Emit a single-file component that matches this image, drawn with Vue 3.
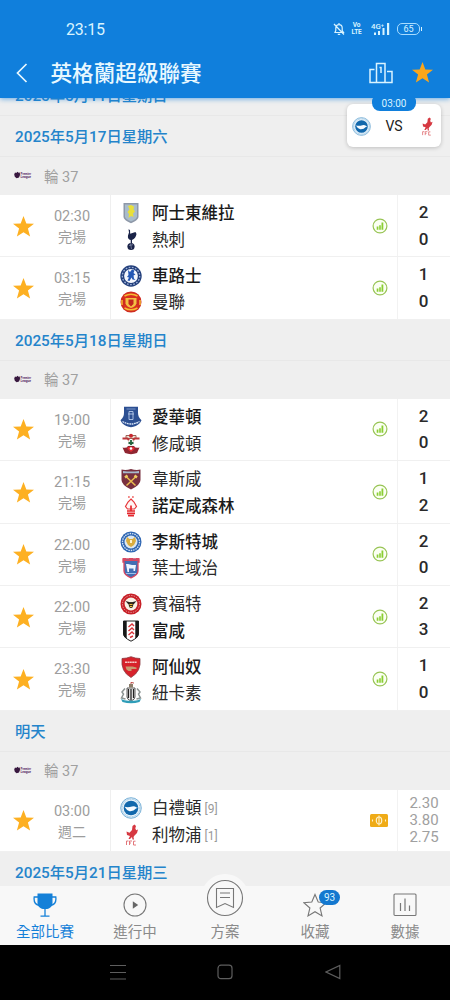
<template>
  <div class="phone">
    <header class="top">
      <div class="status-bar">
        <span class="clock">23:15</span>
        <div class="status-icons">
          <svg class="bell" viewBox="0 0 12 14" fill="none" stroke="#d9f4ff" stroke-width="1.200">
            <path d="M2 10.500h8.500L9.200 8.500V6C9.200 3.800 8 2.600 6 2.600S2.800 3.800 2.800 6v2.500zM6 2.600V1M4.800 12.300h2.400M1 2l10 10.500" />
          </svg>
          <span class="volte"><span>Vo</span><span>LTE</span></span>
          <svg class="signal" viewBox="0 0 20 14">
            <text x="0" y="7" font-size="7.500" font-weight="500" fill="#d9f4ff" textLength="13" lengthAdjust="spacingAndGlyphs">4G⁺</text>
            <path d="M3 10.500h2V13H3zM7 9h2v4H7zM11.500 6h2v7h-2zM16 1h2.200v12H16z" fill="#d9f4ff" />
          </svg>
          <span class="battery">65</span>
        </div>
      </div>
      <div class="title-bar">
        <svg class="back" viewBox="0 0 12 20" fill="none" stroke="#e8f8ff" stroke-width="1.700">
          <path d="M10.500 1L1.500 10l9 9" />
        </svg>
        <h1 class="title">英格蘭超級聯賽</h1>
        <svg class="podium" viewBox="0 0 24 22" fill="none" stroke="#d9f4ff" stroke-width="1.500">
          <path d="M5.500 7.500H1v13h22v-11h-5M7.500 20.500v-19H16v19M10.500 5.500H12v5.500" />
        </svg>
        <svg class="top-star" viewBox="0 0 20 20"><path :d="starPath" fill="#faa61a" /></svg>
      </div>
    </header>

    <div class="float-card">
      <span class="float-time">03:00</span>
      <svg class="float-crest" viewBox="0 0 22 22" v-html="crests.brighton"></svg>
      <span class="float-vs">VS</span>
      <svg class="float-crest" viewBox="0 0 22 22" v-html="crests.liverpool"></svg>
    </div>

    <main class="list">
      <section v-for="group in groups" :key="group.date" class="group">
        <h2 class="date">{{ group.date }}</h2>
        <div v-if="group.matches.length" class="round">
          <svg class="league" viewBox="0 0 18 10">
            <path d="M1 2.500l1.200.6 1.300-1.300 1 .9 1.300-.2.200 2.500-1 2.400-2.400.8L.8 6.800.2 4.500z" fill="#38183f" />
            <text x="6.500" y="4.700" font-size="3.600" font-weight="700" fill="#5b2a68" textLength="10.500" lengthAdjust="spacingAndGlyphs">Premier</text>
            <text x="6.500" y="7.900" font-size="3.600" font-weight="700" fill="#5b2a68" textLength="10.500" lengthAdjust="spacingAndGlyphs">League</text>
          </svg>
          <span>輪 37</span>
        </div>
        <article v-for="match in group.matches" :key="match.home.name" class="match">
          <div class="fav">
            <svg class="star" viewBox="0 0 20 20"><path :d="starPath" fill="#fdb022" /></svg>
          </div>
          <div class="when">
            <span class="kickoff">{{ match.time }}</span>
            <span class="state">{{ match.state }}</span>
          </div>
          <div class="teams">
            <div
              v-for="team in [match.home, match.away]"
              :key="team.name"
              class="team"
              :class="{ winner: team.win }"
            >
              <svg class="crest" viewBox="0 0 22 22" v-html="crests[team.crest]"></svg>
              <span>{{ team.name }}</span>
              <span v-if="team.rank" class="rank">[{{ team.rank }}]</span>
            </div>
          </div>
          <div class="extra">
            <svg v-if="!match.odds" class="stats" viewBox="0 0 16 16">
              <circle cx="8" cy="8" r="6.900" fill="#fbfff3" stroke="#98c455" stroke-width="1.200" />
              <path d="M4.700 8.500h1.700v3.200H4.700zM7.200 7.300h1.600v4.400H7.200zM9.500 4.500h1.800v7.200H9.500z" fill="#8ace32" />
            </svg>
            <svg v-else class="ticket" viewBox="0 0 18 13">
              <rect width="18" height="13" rx="1.500" fill="#efab17" />
              <ellipse cx="9" cy="6.500" rx="2.700" ry="3.500" fill="none" stroke="#fff1c9" stroke-width="1.200" />
              <path d="M9 1.500v10M2.500 5.500v2M15.500 5.500v2" stroke="#fff1c9" stroke-width="1.100" />
            </svg>
          </div>
          <div v-if="match.odds" class="odds">
            <span v-for="odd in match.odds" :key="odd">{{ odd }}</span>
          </div>
          <div v-else class="scores">
            <span>{{ match.home.score }}</span>
            <span>{{ match.away.score }}</span>
          </div>
        </article>
      </section>
    </main>

    <nav class="tabs">
      <div class="tab active">
        <svg class="tab-icon" viewBox="0 0 24 24">
          <path d="M4.500.5h15v9.800c0 3-2.700 5.200-5.300 5.800h-4.400c-2.600-.6-5.300-2.800-5.300-5.800z" fill="#1480d8" />
          <path d="M5 4H1.200c-.6 4.500.4 7.500 5 8.500M19 4h3.800c.6 4.500-.4 7.500-5 8.500M12 15v8M7.500 23.200h9" fill="none" stroke="#1480d8" stroke-width="1.300" />
        </svg>
        <span>全部比賽</span>
      </div>
      <div class="tab">
        <svg class="tab-icon" viewBox="0 0 24 24">
          <circle cx="12" cy="12" r="11" fill="none" stroke="#777" stroke-width="1.100" />
          <path d="M9.800 8.300l5.400 3.700-5.400 3.700z" fill="#666" />
        </svg>
        <span>進行中</span>
      </div>
      <div class="tab center">
        <svg class="plan-icon" viewBox="0 0 50 50">
          <circle cx="25" cy="25" r="24" fill="#f8f8f8" />
          <g fill="none" stroke="#777" stroke-width="1.100">
            <circle cx="25" cy="25" r="17.500" />
            <path d="M16.500 15.500h17v19L25 30.500l-8.500 4zM20 20h10M20 24.500h10" />
          </g>
        </svg>
        <span>方案</span>
      </div>
      <div class="tab">
        <div class="badge-wrap">
          <svg class="tab-icon" viewBox="0 0 24 24">
            <path d="M12 1.500l3.200 7.500 8 .7-6.100 5.300 1.900 7.900-7-4.200-7 4.200 1.900-7.900L.8 9.700l8-.7z" fill="none" stroke="#777" stroke-width="1.100" />
          </svg>
          <span class="badge">93</span>
        </div>
        <span>收藏</span>
      </div>
      <div class="tab">
        <svg class="tab-icon" viewBox="0 0 24 24">
          <rect x="1" y="1" width="22" height="21.500" rx="1" fill="none" stroke="#777" stroke-width="1.100" />
          <path d="M7.500 10v8M12 5.500V18M16.500 12.500V18" stroke="#777" stroke-width="1.200" />
        </svg>
        <span>數據</span>
      </div>
    </nav>

    <footer class="system">
      <svg viewBox="0 0 16 16"><path d="M0 1.500h16M0 8.500h16M0 15h16" /></svg>
      <svg viewBox="0 0 16 16"><rect x="1" y="1.200" width="14" height="13.500" rx="3" /></svg>
      <svg viewBox="0 0 16 16"><path d="M14.800 1.500v13L1 8z" /></svg>
    </footer>
  </div>
</template>

<script setup>
const starPath = 'M10 0l2.700 7.100 7.300.3-5.800 4.600 2.100 7.600L10 15.400l-6.300 4.200L5.800 12 0 7.400l7.300-.3z'

const crests = {
  villa: `<path d="M3.500 1h15v13.500c0 3-3 4.500-7.500 6.700C6.500 19 3.500 17.500 3.500 14.500z" fill="#8e98a8"/>
    <path d="M5 2.500h12v11.800c0 2-2 3.300-6 5.300-4-2-6-3.300-6-5.300z" fill="#a9bccb"/>
    <path d="M8 4l3-1 3 1.500-.5 3 1.500 2-2 2 .5 3.500-2.500-1-2.500 2 .5-4L7.500 10l2-2.500z" fill="#e9e03a"/>`,
  spurs: `<circle cx="11" cy="17.500" r="3.600" fill="#1a2348"/><path d="M9 16.500l4-.8M10.500 14.500l1 5.500" stroke="#8b93b0" stroke-width=".7"/>
    <path d="M8.500.3L10 1l.2 3.700L15.500 3l1 2c-.5 3-2 5-4.500 6v3h-1.300v-3C8.500 10.500 7.500 9 8 6.500l1-3z" fill="#1a2348"/>`,
  chelsea: `<circle cx="11" cy="11" r="10.700" fill="#24407c"/><circle cx="11" cy="11" r="8.700" fill="none" stroke="#9fb2d8" stroke-width="1.300" stroke-dasharray="1.700 1.500"/>
    <circle cx="11" cy="11" r="6.900" fill="#f4f7fd"/><path d="M8 5l2 2 2-2.500 2.500 1-1 2.500 2 1.500-2 1 .5 3 1.500 1.500-3-.5-1-2-2 3.500-2-.5 1.500-3-2-.5L8.500 10z" fill="#2458b5"/>`,
  united: `<circle cx="11" cy="11" r="10.500" fill="#cf2b20"/><path d="M2.500 6.500l3-4h11l3 4-2 2.500h-13zM3 14l3 5.500h10l3-5.500z" fill="#d9301f"/>
    <path d="M4.500 5Q11 1.500 17.500 5M4.500 17Q11 20.500 17.500 17M2 9v5M20 9v5" fill="none" stroke="#f5bc32" stroke-width="1.500"/>
    <path d="M5.500 7h11v5.500Q15.500 15.500 11 17q-4.500-1.500-5.500-4.500z" fill="#f3c044"/><path d="M8.500 8.500h5v4.500L11 15.500 8.500 13z" fill="#c2251f"/>`,
  everton: `<path d="M4 .8h14v6c0 3 1 5 3.500 7.500L20 17q-4 4-9 4.200Q6 21 2 17L.5 14.300C3 12 4 10 4 6.800z" fill="#2c4f92"/>
    <path d="M9 5.500h4v8H9zM8 8h6" fill="none" stroke="#b5c9ea" stroke-width=".9"/><path d="M2.500 15.500q8.500 5 17 0" fill="none" stroke="#dce7f8" stroke-width="1.300" stroke-dasharray="1.800 .6"/><path d="M6.500 3h9" stroke="#7b98c9"/>`,
  southampton: `<path d="M6 2.500h10v3H6z" fill="#e9e2d4" stroke="#9e6155"/><circle cx="11" cy="2.800" r="2" fill="#c8262f"/><path d="M2.500 5.500h5l2 2.500h3l2-2.500h5" fill="none" stroke="#bc3438" stroke-width="2"/>
    <path d="M8.500 7h5v6h-5z" fill="#e9efe6"/><path d="M11 7v5M8.500 10h5" stroke="#22633d" stroke-width="1.800"/>
    <path d="M2.500 14.500q4 1.200 5.500-1.500h6q1.500 2.700 5.500 1.500L17 20q-6 2.300-12 0z" fill="#8f2631"/><path d="M7.500 14h7v2L11 19l-3.500-3z" fill="#e32c35"/><circle cx="11" cy="15.500" r="1.300" fill="#fff"/>`,
  westham: `<path d="M1.500 1.500Q6 2.500 11 1q5 1.500 9.500.5V12q0 5-9.500 9.500Q1.500 17 1.500 12z" fill="#79303f"/><path d="M3 3q8 1 16 0v2.300H3z" fill="#a8b9cd"/>
    <path d="M6 8.500l9.500 9M16 8.500l-9.500 9" stroke="#eabc4f" stroke-width="1.500"/><path d="M5 9.500L7.500 7.500M14.500 7.500L17 9.500" stroke="#efcb62" stroke-width="2.400"/>`,
  forest: `<path d="M8 2h1.800M12 2h1.800" stroke="#ef6160" stroke-width="1.300"/><path d="M11 4l3 3 2.500 4.500-2 2.500H7.500l-2-2.500L8 7z" fill="#fff4f3" stroke="#e6373a" stroke-width="1.200"/>
    <path d="M11 10.500V16M7 16h8M7 18.300h8M8 20.700h6" stroke="#e4272d" stroke-width="1.700"/>`,
  leicester: `<circle cx="11" cy="11" r="10.500" fill="#2e66b2"/><circle cx="11" cy="11" r="8.500" fill="none" stroke="#d7e5f5" stroke-width="1.300" stroke-dasharray="1.500 .9"/>
    <circle cx="11" cy="11" r="6.500" fill="#dce8f2"/><path d="M7 6l2.500 2h3L15 6l1 4-2 4-3 2-3-2-2-4z" fill="#d9ad3f"/><path d="M10 9h2v3h-2z" fill="#fff3cb"/>`,
  ipswich: `<path d="M3 2h16v3h-1v9q0 4-7 6.800Q4 18 4 14V5H3z" fill="#426eb4" stroke="#d94761" stroke-width="1.300"/><path d="M3 1h3v2h3V1h4v2h3V1h3v3H3z" fill="#d94761"/>
    <path d="M6 7h2l4 1h4l-1 6h-1.500v-2.500H9V15H7.500z" fill="#eef5ff"/><path d="M6 16.500h10" stroke="#9cc0e8"/>`,
  brentford: `<circle cx="11" cy="11" r="10.500" fill="#c72027"/><circle cx="11" cy="11" r="8.500" fill="none" stroke="#eba5a5" stroke-width="1" stroke-dasharray="1.300 1.200"/>
    <circle cx="11" cy="11" r="6.400" fill="#f8f1e5"/><path d="M5.500 8l5.500 1.500L16.500 8l-3 3.500h-5z" fill="#27201e"/><ellipse cx="11" cy="12" rx="2.200" ry="3" fill="#332b1c"/><path d="M9.500 11.500h3M9.800 13.500h2.500" stroke="#f0bd38"/>`,
  fulham: `<path d="M3.500 1h15v13q0 3.500-7.500 7.200Q3.500 17.500 3.500 14z" fill="#fff" stroke="#222"/><path d="M3.500 1h3.200v17.500Q3.500 17 3.500 14zM18.500 1h-3.200v17.500q3.200-1.500 3.200-4.500z" fill="#171717"/>
    <path d="M8.500 7L12 4l2 2M8.500 11L12 8l2 2M8.500 15l3.500-3 2 2M10 17.500l3-1.500" fill="none" stroke="#d9343b" stroke-width="1.400"/>`,
  arsenal: `<path d="M2 2.500Q6.500 2.500 11 .7q4.500 1.800 9 1.800 1.500 13-9 19Q.5 15.500 2 2.500z" fill="#d7222b" stroke="#8a3c42" stroke-width=".8"/>
    <path d="M5 6.300h12" stroke="#f5c9c7" stroke-width="1.600" stroke-dasharray="2 .4"/><path d="M5.500 10.500h7l4 1v1.500h-5v2h-3l-2-1.500z" fill="#c79c72"/>`,
  newcastle: `<path d="M7 6h8v9q0 2.500-4 4-4-1.500-4-4z" fill="#f5f5f5" stroke="#333" stroke-width=".8"/><path d="M8.500 7v9M11 7v11M13.500 7v9" stroke="#222" stroke-width="1.300"/>
    <path d="M9 5.500V2h4v3.500z" fill="#8b7d6a"/><path d="M11 2V.3l3 .8" fill="none" stroke="#b83b35" stroke-width=".9"/>
    <path d="M5 6.500L2 10l1.500 2L1.500 16l4 1M17 6.500l3 3.500-1.500 2 2 4-4 1" fill="none" stroke="#8b9392" stroke-width="1.500"/><path d="M1 17q5 2.500 10 1.500Q16 19.500 21 17l-1.500 3q-8.500 2.500-17 0z" fill="#2f9db8"/>`,
  brighton: `<circle cx="11" cy="11" r="10.300" fill="#e8f3fb" stroke="#5c9fce" stroke-width=".8"/><circle cx="11" cy="11" r="8.900" fill="none" stroke="#8bbbdc" stroke-width="1" stroke-dasharray="1 .7"/>
    <circle cx="11" cy="11" r="7.300" fill="#1268ac"/><path d="M4.500 9.800q3.500 1 7.500-.3 2.500-.7 4.500 1l1.500.3-2 .8q-2.500 3-6.500 2.600-3-.8-5-4.400z" fill="#f8fbff"/>`,
  liverpool: `<path d="M14.500.5L16 2l-.7 2.300.8 2L18 5.500l-1 3.500-2.500 2.500-1 1.500.5 2.500h-1.500l-.5-2.500-2 2H8.500l1.500-3L7 11l-.5-3.500 3 1.200L12 6l.5-4z" fill="#d63841"/>
    <path d="M6.500 21v-4h2M9.500 21v-4h2.500M9.500 19H11M15.500 17.200h-2V21h2.500" fill="none" stroke="#e2767a" stroke-width="1"/>`
}

const played = (time, home, homeCrest, homeScore, away, awayCrest, awayScore) => ({
  time,
  state: '完場',
  home: { name: home, crest: homeCrest, score: homeScore, win: homeScore > awayScore },
  away: { name: away, crest: awayCrest, score: awayScore, win: awayScore > homeScore }
})

const groups = [
  { date: '2025年5月11日星期日', matches: [] },
  {
    date: '2025年5月17日星期六',
    matches: [
      played('02:30', '阿士東維拉', 'villa', 2, '熱刺', 'spurs', 0),
      played('03:15', '車路士', 'chelsea', 1, '曼聯', 'united', 0)
    ]
  },
  {
    date: '2025年5月18日星期日',
    matches: [
      played('19:00', '愛華頓', 'everton', 2, '修咸頓', 'southampton', 0),
      played('21:15', '韋斯咸', 'westham', 1, '諾定咸森林', 'forest', 2),
      played('22:00', '李斯特城', 'leicester', 2, '葉士域治', 'ipswich', 0),
      played('22:00', '賓福特', 'brentford', 2, '富咸', 'fulham', 3),
      played('23:30', '阿仙奴', 'arsenal', 1, '紐卡素', 'newcastle', 0)
    ]
  },
  {
    date: '明天',
    matches: [
      {
        time: '03:00',
        state: '週二',
        home: { name: '白禮頓', crest: 'brighton', rank: 9 },
        away: { name: '利物浦', crest: 'liverpool', rank: 1 },
        odds: ['2.30', '3.80', '2.75']
      }
    ]
  },
  { date: '2025年5月21日星期三', matches: [] }
]
</script>

<style>
body {
  margin: 0;
  background: #000;
}
</style>

<style scoped>
.phone {
  position: relative;
  width: 450px;
  height: 1000px;
  display: flex;
  flex-direction: column;
  overflow: hidden;
  background: #efefef;
  font-family: Roboto, 'Noto Sans CJK TC', sans-serif;
}

svg {
  display: block;
  flex-shrink: 0;
}

.top {
  position: relative;
  z-index: 2;
  height: 98px;
  flex-shrink: 0;
  background: #107fdc;
  box-shadow: 0 1px 5px rgba(16, 127, 220, 0.6);
}

.status-bar {
  display: flex;
  align-items: center;
  justify-content: space-between;
  height: 47px;
  padding: 11px 30px 0 66px;
  box-sizing: border-box;
  color: #d9f4ff;
}

.clock {
  font-size: 16px;
  letter-spacing: -0.2px;
}

.status-icons {
  display: flex;
  align-items: center;
}

.bell {
  width: 12px;
  height: 14px;
}

.volte {
  display: flex;
  flex-direction: column;
  width: 11px;
  margin-left: 6px;
  font-size: 6.5px;
  font-weight: 700;
  line-height: 7px;
  text-align: center;
  letter-spacing: -0.2px;
}

.signal {
  width: 20px;
  height: 14px;
  margin-left: 9px;
}

.battery {
  position: relative;
  width: 21px;
  height: 10px;
  margin-left: 6px;
  border: 1.5px solid #a8dcff;
  border-radius: 5px;
  font-size: 9px;
  line-height: 10px;
  text-align: center;
}

.battery::after {
  content: '';
  position: absolute;
  right: -3px;
  top: 3px;
  width: 1.5px;
  height: 4px;
  background: #d9f4ff;
}

.title-bar {
  display: flex;
  align-items: center;
  height: 51px;
  padding: 0 17px 0 16px;
}

.back {
  width: 12px;
  height: 20px;
}

.title {
  flex: 1;
  margin: 2px 0 0 22.5px;
  font-size: 21.6px;
  font-weight: 500;
  line-height: 30px;
  color: #e8f8ff;
}

.podium {
  width: 24px;
  height: 22px;
}

.top-star {
  width: 21px;
  height: 21px;
  margin-left: 19px;
}

/* next fixture, floats above the list */
.float-card {
  position: absolute;
  z-index: 3;
  left: 347px;
  top: 104px;
  width: 94px;
  height: 43px;
  display: flex;
  align-items: center;
  justify-content: space-between;
  padding: 1px 5px 0;
  box-sizing: border-box;
  border-radius: 6px;
  background: #fff;
  box-shadow: 0 1px 4px rgba(0, 0, 0, 0.2);
}

.float-time {
  position: absolute;
  left: 25px;
  top: -8px;
  width: 44px;
  height: 15px;
  border-radius: 5px 5px 8px 8px;
  background: #107fdc;
  color: #d9f4ff;
  font-size: 10px;
  line-height: 16px;
  text-align: center;
}

.float-crest {
  width: 19px;
  height: 19px;
}

.float-vs {
  font-size: 14px;
  color: #222;
}

.list {
  flex: 1;
  min-height: 0;
  margin-top: -23px;
  overflow: hidden;
}

.date {
  height: 41px;
  margin: 0;
  padding: 1px 0 0 15px;
  box-sizing: border-box;
  border-bottom: 1px solid #e8e8e8;
  font-size: 15.3px;
  font-weight: 500;
  line-height: 40px;
  color: #2484cb;
}

.round {
  display: flex;
  align-items: center;
  gap: 12px;
  height: 38px;
  padding: 0 0 2px 14px;
  box-sizing: border-box;
  font-size: 14.5px;
  color: #a0a0a0;
}

.league {
  width: 18px;
  height: 10px;
}

.match {
  display: flex;
  height: 62.4px;
  box-sizing: border-box;
  border-bottom: 1px solid #f0f0f0;
  background: #fff;
}

.fav {
  display: flex;
  align-items: center;
  width: 48px;
  padding: 1px 0 0 13px;
  box-sizing: border-box;
}

.star {
  width: 21px;
  height: 21px;
}

.when {
  display: flex;
  flex-direction: column;
  align-items: center;
  width: 63px;
  padding: 12px 14px 0 0;
  box-sizing: border-box;
  border-right: 1px solid #efefef;
  color: #9d9d9d;
}

.kickoff {
  font-size: 14.5px;
  line-height: 20px;
}

.state {
  font-size: 14px;
  line-height: 21px;
}

.teams {
  display: flex;
  flex: 1;
  flex-direction: column;
  padding: 5px 0 0 9px;
}

.team {
  display: flex;
  align-items: center;
  height: 26.6px;
  font-size: 16.5px;
  line-height: 26px;
  color: #2a2a2a;
}

.team span {
  padding-top: 2px;
}

.winner {
  font-weight: 500;
  color: #1a1a1a;
}

.crest {
  width: 22px;
  height: 22px;
  margin-right: 10px;
}

.team .rank {
  margin-left: 3px;
  font-size: 12px;
  color: #999;
}

.extra {
  display: flex;
  align-items: center;
  justify-content: flex-end;
  width: 36px;
  padding-right: 9px;
  box-sizing: border-box;
  border-right: 1px solid #f2f2f2;
}

.stats {
  width: 16px;
  height: 16px;
}

.ticket {
  width: 18px;
  height: 13px;
}

.scores,
.odds {
  display: flex;
  flex-direction: column;
  align-items: center;
  width: 52px;
  box-sizing: border-box;
}

.scores {
  padding-top: 4px;
  padding-right: 1px;
  font-size: 17px;
  font-weight: 500;
  line-height: 26.5px;
  color: #2a2a2a;
}

.odds {
  padding-top: 5px;
  font-size: 15px;
  line-height: 17px;
  color: #a0a0a0;
}

.tabs {
  position: relative;
  z-index: 2;
  display: grid;
  grid-template-columns: repeat(5, 1fr);
  height: 59px;
  flex-shrink: 0;
  background: #f8f8f8;
}

.tab {
  display: flex;
  flex-direction: column;
  align-items: center;
  gap: 5px;
  padding-top: 7px;
  font-size: 14.5px;
  line-height: 21px;
  color: #8a8a8a;
}

.tab.active {
  color: #1480d8;
}

.tab-icon {
  width: 24px;
  height: 24px;
}

.tab.center {
  padding-top: 0;
}

.plan-icon {
  width: 50px;
  height: 50px;
  margin: -13px 0 -6px;
}

.badge-wrap {
  position: relative;
}

.badge {
  position: absolute;
  left: 16px;
  top: -3px;
  width: 21px;
  height: 15px;
  border-radius: 8px;
  background: #1478cf;
  color: #d9f4ff;
  font-size: 10px;
  line-height: 15px;
  text-align: center;
}

.system {
  display: flex;
  align-items: center;
  justify-content: center;
  gap: 91.5px;
  height: 55px;
  padding-bottom: 1px;
  box-sizing: border-box;
  flex-shrink: 0;
  background: #000;
}

.system svg {
  width: 16px;
  height: 16px;
  fill: none;
  stroke: #5e5e5e;
  stroke-width: 1.2;
}
</style>
